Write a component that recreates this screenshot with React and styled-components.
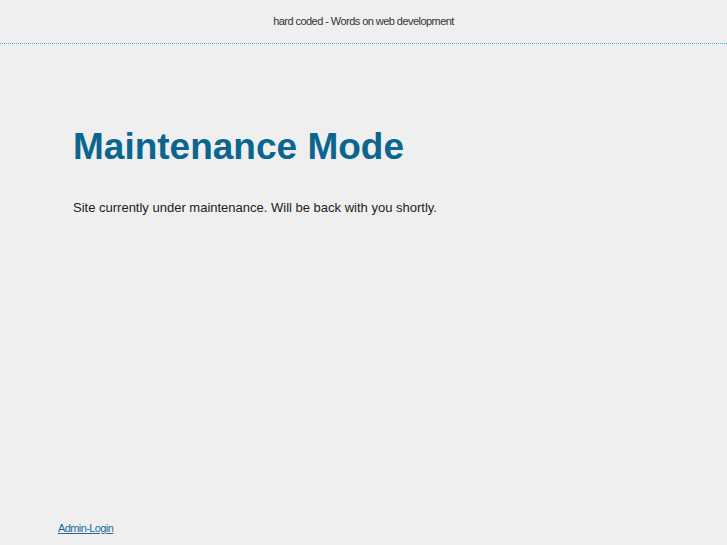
import React from "react";
import styled, { createGlobalStyle } from "styled-components";

const Global = createGlobalStyle`
  html, body { margin: 0; padding: 0; background: #efefef; }
  body { font-family: "Liberation Sans", Arial, sans-serif; }
`;

const Page = styled.div`
  min-height: 545px;
  display: flex;
  flex-direction: column;
`;

const Header = styled.header`
  height: 44px;
  border-bottom: 1px dotted #4fb3d6;
  display: flex;
  align-items: center;
  justify-content: center;
  font-size: 11px;
  color: #333;
  letter-spacing: -0.55px;
  padding-bottom: 2px;
  box-sizing: border-box;
`;

const Main = styled.main`
  flex: 1;
  padding: 81px 0 0 73px;
`;

const Title = styled.h1`
  margin: 0;
  font-size: 37px;
  font-weight: bold;
  color: #0a668f;
  line-height: 44px;
`;

const Text = styled.p`
  margin: 31px 0 0;
  font-size: 13px;
  color: #222;
`;

const Footer = styled.footer`
  padding: 0 0 11px 58px;
  font-size: 11px;
`;

const Link = styled.a`
  color: #1a6c9a;
  text-decoration: underline;
  letter-spacing: -0.6px;
`;

export default function App() {
  return (
    <Page>
      <Global />
      <Header>hard coded - Words on web development</Header>
      <Main>
        <Title>Maintenance Mode</Title>
        <Text>Site currently under maintenance. Will be back with you shortly.</Text>
      </Main>
      <Footer>
        <Link href="#">Admin-Login</Link>
      </Footer>
    </Page>
  );
}
